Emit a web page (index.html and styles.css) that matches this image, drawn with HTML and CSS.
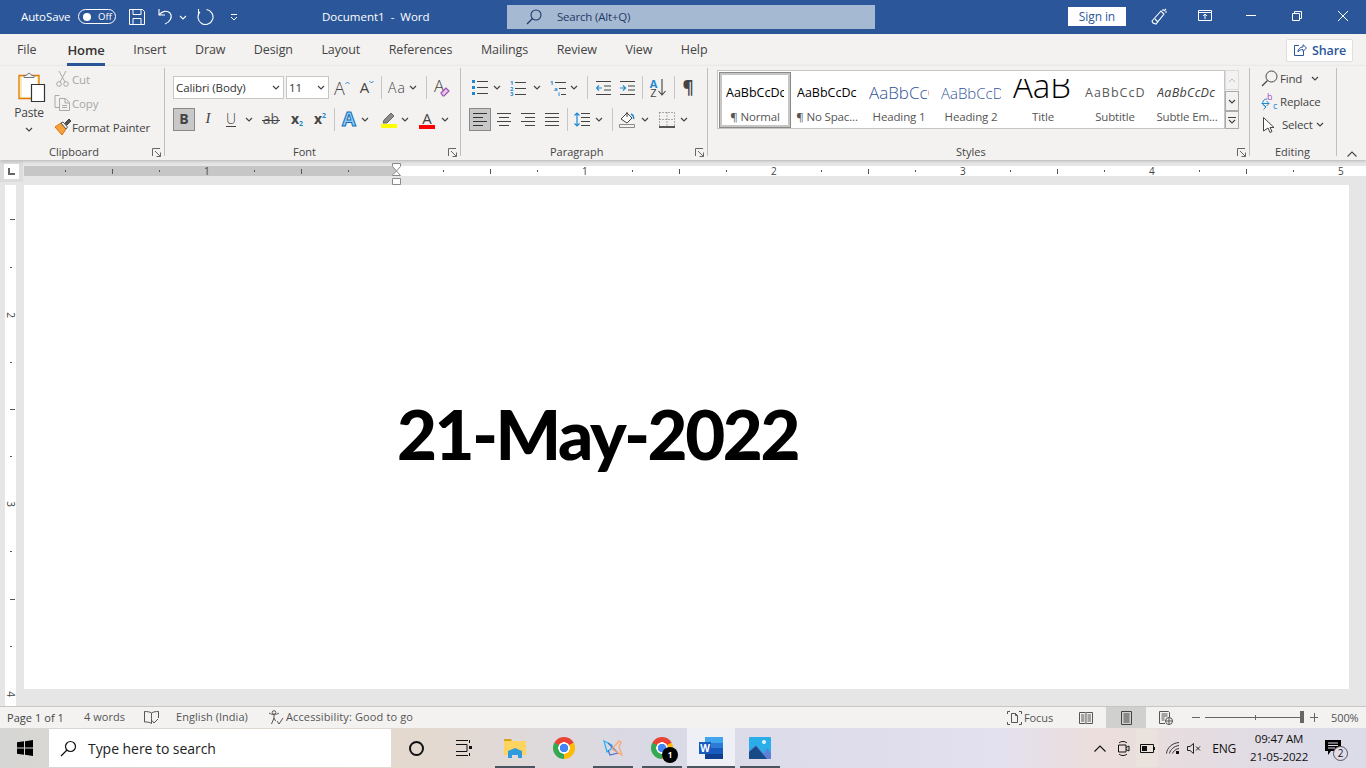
FILE: index.html
```html
<!DOCTYPE html>
<html lang="en">
<head>
<meta charset="utf-8">
<title>Document1 - Word</title>
<link rel="stylesheet" href="styles.css">
</head>
<body>
<svg class="sprite" aria-hidden="true">
  <symbol id="chev" viewBox="0 0 8 5"><path d="M1 1l3 3 3-3" fill="none" stroke="#444" stroke-width="1.2"/></symbol>
  <symbol id="launch" viewBox="0 0 9 9"><path d="M.5 8V.5H8M3 3l5.5 5.5M8.5 4.5v4h-4" fill="none" stroke="#666"/></symbol>
</svg>
<div class="app">
  <header class="titlebar">
    <span class="autosave">AutoSave</span>
    <span class="toggle"><i class="knob"></i><span class="off">Off</span></span>
    <svg class="qa-save" width="16" height="16" viewBox="0 0 16 16"><path d="M.5.5h13l2 2v13H.5zM4 .5v5h8v-5M4 15.5v-6h8v6" fill="none" stroke="#fff"/></svg>
    <svg class="qa-undo" width="16" height="17" viewBox="0 0 16 17"><path d="M1 1v6h6M1 7c3-4 8-5 11-2 3 4 0 9-5 11" fill="none" stroke="#fff" stroke-width="1.1"/></svg>
    <svg class="qa-chev" width="8" height="5"><path d="M1 1l3 3 3-3" fill="none" stroke="#fff" stroke-width="1.1"/></svg>
    <svg class="qa-redo" width="17" height="17" viewBox="0 0 17 17"><path d="M1.500 1v5M3 3.900A7.500 7.500 0 1 0 9.500 1.570" fill="none" stroke="#fff" stroke-width="1.1"/></svg>
    <svg class="qa-more" width="8" height="7" viewBox="0 0 8 7"><path d="M1 .5h6M1 3l3 3 3-3" fill="none" stroke="#fff"/></svg>
    <span class="doc-title">Document1&nbsp; -&nbsp; Word</span>
    <div class="searchbox">
      <svg width="16" height="16" viewBox="0 0 16 16"><circle cx="10" cy="6" r="5" fill="none" stroke="#1f3a66" stroke-width="1.1"/><path d="M6.5 9.5L1 15" stroke="#1f3a66" stroke-width="1.2"/></svg>
      <span>Search (Alt+Q)</span>
    </div>
    <span class="signin">Sign in</span>
    <svg class="tb-pen" width="16" height="17" viewBox="0 0 16 17"><path d="M1 13L10 3l3 3-8 10-3-1zM4 11l3 3M12 1v2M14 4h2M13 3l2-2" fill="none" stroke="#fff" stroke-width="1.1"/></svg>
    <svg class="tb-display" width="14" height="11" viewBox="0 0 14 11"><path d="M.5.5h13v10H.5zM.5 2.5h13M7 9V4.5M5 6l2-2 2 2" fill="none" stroke="#fff"/></svg>
    <svg class="tb-min" width="10" height="1"><path d="M0 .5h10" stroke="#fff"/></svg>
    <svg class="tb-max" width="10" height="10" viewBox="0 0 10 10"><path d="M.5 2.5h7v7h-7zM2.5 2.5v-2h7v7h-2" fill="none" stroke="#fff"/></svg>
    <svg class="tb-close" width="10" height="10" viewBox="0 0 10 10"><path d="M0 0l10 10M10 0L0 10" stroke="#fff"/></svg>
  </header>

  <nav class="tabs">
    <span class="tab tab-file">File</span>
    <span class="tab tab-home">Home</span>
    <span class="tab">Insert</span>
    <span class="tab">Draw</span>
    <span class="tab">Design</span>
    <span class="tab">Layout</span>
    <span class="tab">References</span>
    <span class="tab">Mailings</span>
    <span class="tab">Review</span>
    <span class="tab">View</span>
    <span class="tab">Help</span>
    <span class="share">
      <svg width="13" height="12" viewBox="0 0 13 12"><path d="M5 1.5H.5v10h9V7M4 8c0-3 2-5 5-5V.7l3.5 3.3L9 7.300V5.500C7 5.500 5 6 4 8z" fill="none" stroke="#2b579a"/></svg>
      Share
    </span>
  </nav>

  <section class="ribbon">
    <div class="group g-clip">
      <div class="gbody clip-body">
        <div class="paste">
          <svg class="paste-ico" width="28" height="31" viewBox="0 0 28 31"><path d="M1 3.500h20v23H1z" fill="#fde9b8" stroke="#e07b00" stroke-width="1.300"/><path d="M4 5h15v20H4z" fill="#fff"/><path d="M8 3.500l3-2.500 3 2.500h2v2H6v-2z" fill="#f3f2f1" stroke="#777"/><path d="M13.500 12.500h13v17h-13z" fill="#fff" stroke="#333" stroke-width="1.200"/></svg>
          <span class="paste-label">Paste</span>
          <svg class="chev" width="8" height="5"><use href="#chev"/></svg>
        </div>
        <div class="clip-list">
          <div class="clip-row dim">
            <svg width="18" height="18" viewBox="0 0 18 18"><path d="M5 1l6 11M12 1L6 12" stroke="#a9a9a9" fill="none"/><circle cx="5" cy="14" r="2.300" fill="none" stroke="#a9a9a9"/><circle cx="12" cy="14" r="2.300" fill="none" stroke="#a9a9a9"/></svg>
            <span>Cut</span>
          </div>
          <div class="clip-row dim">
            <svg width="18" height="18" viewBox="0 0 18 18"><path d="M5.500 1.500H1v12h4M5.500 4.500h6l4 4v8h-10zM11 4.500v4.500h4.500M8 11.500h5M8 13.500h5" fill="none" stroke="#a9a9a9"/></svg>
            <span>Copy</span>
          </div>
          <div class="clip-row">
            <svg width="18" height="18" viewBox="0 0 18 18"><path d="M1 9l6-4 5 6-4 6z" fill="#f7a13a" stroke="#d9730d"/><path d="M7 5l5 6 1.500-2L9 4z" fill="#fff" stroke="#555"/><path d="M10.500 5.500L15 1l2 2-4.500 4.500" fill="#555" stroke="#444"/></svg>
            <span>Format Painter</span>
          </div>
        </div>
      </div>
      <div class="gfoot"><span class="foot-label foot-clip">Clipboard</span><svg class="launch" width="9" height="9"><use href="#launch"/></svg></div>
    </div>

    <div class="group g-font">
      <div class="gbody rows">
        <div class="row">
          <span class="combo w111"><span>Calibri (Body)</span><svg class="chev" width="8" height="5"><use href="#chev"/></svg></span>
          <span class="combo w43 ml2"><span>11</span><svg class="chev" width="8" height="5"><use href="#chev"/></svg></span>
          <span class="cell w24 ml1"><span class="glyph g18">A</span><svg class="caret" width="5" height="3" viewBox="0 0 5 3"><path d="M.5 3l2-2 2 2" fill="none" stroke="#2b88d8"/></svg></span>
          <span class="cell w26"><span class="glyph g15">A</span><svg class="caret" width="5" height="3" viewBox="0 0 5 3"><path d="M.5 0l2 2 2-2" fill="none" stroke="#2b88d8"/></svg></span>
          <i class="sep w2"></i>
          <span class="cell w24 ml3"><span class="glyph g14 spaced">Aa</span></span>
          <span class="cell w8"><svg width="8" height="5"><use href="#chev"/></svg></span>
          <i class="sep w2 ml8"></i>
          <span class="cell w30"><span class="glyph g17 clear-a">A</span><svg class="eraser" width="10" height="10" viewBox="0 0 10 10"><path d="M1 6l5-5 3 3-5 5H3z" fill="#e8c8ee" stroke="#9b4fb0" stroke-width="1.200"/></svg></span>
        </div>
        <div class="row row-low">
          <span class="cell w22 pressed"><b class="glyph g14">B</b></span>
          <span class="cell w26"><i class="glyph g15 serif-i">I</i></span>
          <span class="cell w20"><span class="glyph g14 under">U</span></span>
          <span class="cell w16"><svg width="8" height="5"><use href="#chev"/></svg></span>
          <span class="cell w28"><span class="glyph g14 strike">ab</span></span>
          <span class="cell w24"><b class="glyph g14">x</b><b class="sub">2</b></span>
          <span class="cell w22"><b class="glyph g14">x</b><b class="sup">2</b></span>
          <i class="sep w6"></i>
          <span class="cell w24"><b class="glyph effects">A</b></span>
          <span class="cell w8"><svg width="8" height="5"><use href="#chev"/></svg></span>
          <span class="cell w24 ml8">
            <span class="colored">
              <svg width="14" height="12" viewBox="0 0 14 12"><path d="M1 11l1-3 7-7 3 3-7 7z" fill="#8a8a8a" stroke="#666"/></svg>
              <i class="bar bar-yellow"></i>
            </span>
          </span>
          <span class="cell w8"><svg width="8" height="5"><use href="#chev"/></svg></span>
          <span class="cell w28 ml4">
            <span class="colored"><span class="glyph g15 a-color">A</span><i class="bar bar-red"></i></span>
          </span>
          <span class="cell w8"><svg width="8" height="5"><use href="#chev"/></svg></span>
        </div>
      </div>
      <div class="gfoot"><span class="foot-label foot-font">Font</span><svg class="launch" width="9" height="9"><use href="#launch"/></svg></div>
    </div>

    <div class="group g-para">
      <div class="gbody rows">
        <div class="row">
          <span class="cell w22"><svg width="16" height="15" viewBox="0 0 16 15"><path d="M0 0h3v3H0zM0 6h3v3H0zM0 12h3v3H0z" fill="#1e88d0"/><path d="M5 1.500h11M5 7.500h11M5 13.500h11" stroke="#444"/></svg></span>
          <span class="cell w12"><svg width="8" height="5"><use href="#chev"/></svg></span>
          <span class="cell w30"><svg width="16" height="16" viewBox="0 0 16 16"><text class="listnum" x="0" y="5">1</text><text class="listnum" x="0" y="10.500">2</text><text class="listnum" x="0" y="16">3</text><path d="M5 2.500h11M5 8.500h11M5 14.500h11" stroke="#444"/></svg></span>
          <span class="cell w8"><svg width="8" height="5"><use href="#chev"/></svg></span>
          <span class="cell w17 ml8"><svg width="16" height="16" viewBox="0 0 16 16"><text class="listnum" x="0" y="5">1</text><text class="listnum" x="4" y="10.500">a</text><text class="listnum" x="8" y="16">i</text><path d="M5 2.500h11M9 8.500h7M11 14.500h5" stroke="#444"/></svg></span>
          <span class="cell w8 ml4"><svg width="8" height="5"><use href="#chev"/></svg></span>
          <i class="sep w2 ml8"></i>
          <span class="cell w30"><svg width="15" height="14" viewBox="0 0 15 14"><path d="M0 .500h15M8 5h7M8 9h7M0 13.500h15" stroke="#444"/><path d="M6 7H.5M3 4.500L.5 7 3 9.500" fill="none" stroke="#1e88d0" stroke-width="1.200"/></svg></span>
          <span class="cell w18"><svg width="15" height="14" viewBox="0 0 15 14"><path d="M0 .500h15M8 5h7M8 9h7M0 13.500h15" stroke="#444"/><path d="M0 7h5.500M3 4.500L5.500 7 3 9.500" fill="none" stroke="#1e88d0" stroke-width="1.200"/></svg></span>
          <i class="sep w2 ml5"></i>
          <span class="cell w30 sort"><span class="sort-az"><b class="sort-a">A</b><span class="sort-z">Z</span></span><svg width="8" height="17" viewBox="0 0 8 17"><path d="M4 0v16M.5 12L4 16l3.500-4" fill="none" stroke="#444" stroke-width="1.100"/></svg></span>
          <i class="sep w2"></i>
          <span class="cell w26"><span class="glyph pilcrow">¶</span></span>
        </div>
        <div class="row">
          <span class="cell w22 pressed"><svg width="14" height="13" viewBox="0 0 14 13"><path d="M0 .500h14M0 4.500h10M0 8.500h14M0 12.500h10" stroke="#333"/></svg></span>
          <span class="cell w26"><svg width="14" height="13" viewBox="0 0 14 13"><path d="M0 .500h14M2 4.500h10M0 8.500h14M2 12.500h10" stroke="#444"/></svg></span>
          <span class="cell w22"><svg width="14" height="13" viewBox="0 0 14 13"><path d="M0 .500h14M4 4.500h10M0 8.500h14M4 12.500h10" stroke="#444"/></svg></span>
          <span class="cell w26"><svg width="14" height="13" viewBox="0 0 14 13"><path d="M0 .500h14M0 4.500h14M0 8.500h14M0 12.500h14" stroke="#444"/></svg></span>
          <i class="sep w4"></i>
          <span class="cell w26"><svg width="16" height="15" viewBox="0 0 16 15"><path d="M7 1.500h9M7 5.500h9M7 9.500h9M7 13.500h9" stroke="#444"/><path d="M3 1v13M.5 3.500L3 1l2.500 2.500M.5 11.500L3 14l2.500-2.500" fill="none" stroke="#1e88d0" stroke-width="1.200"/></svg></span>
          <span class="cell w8"><svg width="8" height="5"><use href="#chev"/></svg></span>
          <i class="sep w2 ml8"></i>
          <span class="cell w28"><svg width="16" height="17" viewBox="0 0 16 17"><path d="M2 8l6-6 5 5-5 5z" fill="#fff" stroke="#444"/><path d="M8 1v5" stroke="#444"/><path d="M12 3c2 1 3 3 2.500 5" fill="none" stroke="#1e88d0" stroke-width="1.500"/><path d="M.5 13.500h15v3H.5z" fill="#f3f2f1" stroke="#8a8a8a"/></svg></span>
          <span class="cell w8"><svg width="8" height="5"><use href="#chev"/></svg></span>
          <span class="cell w16 ml10"><svg width="16" height="16" viewBox="0 0 16 16"><path d="M.5.500h15M.5.500v14M15.500.500v14M.5 7.500h15M8 .500v14" fill="none" stroke="#666" stroke-dasharray="1 2"/><path d="M0 15h16" stroke="#222" stroke-width="1.500"/></svg></span>
          <span class="cell w8 ml5"><svg width="8" height="5"><use href="#chev"/></svg></span>
        </div>
      </div>
      <div class="gfoot"><span class="foot-label foot-para">Paragraph</span><svg class="launch" width="9" height="9"><use href="#launch"/></svg></div>
    </div>

    <div class="group g-styles">
      <div class="gbody styles-body">
        <div class="gallery">
          <div class="style selected"><span class="preview p-normal">AaBbCcDc</span><span class="style-name">¶ Normal</span></div>
          <div class="style"><span class="preview p-normal">AaBbCcDc</span><span class="style-name">¶ No Spac...</span></div>
          <div class="style"><span class="preview p-h1">AaBbCcC</span><span class="style-name">Heading 1</span></div>
          <div class="style"><span class="preview p-h2">AaBbCcD</span><span class="style-name">Heading 2</span></div>
          <div class="style"><span class="preview p-title"><span>AaB</span></span><span class="style-name">Title</span></div>
          <div class="style"><span class="preview p-sub">AaBbCcD</span><span class="style-name">Subtitle</span></div>
          <div class="style"><span class="preview p-em">AaBbCcDc</span><span class="style-name">Subtle Em...</span></div>
        </div>
        <div class="gal-scroll">
          <span class="gal-btn gal-up"><svg width="8" height="5" viewBox="0 0 8 5"><path d="M1 4l3-3 3 3" fill="none" stroke="#bbb"/></svg></span>
          <span class="gal-btn gal-down"><svg width="8" height="5"><use href="#chev"/></svg></span>
          <span class="gal-btn gal-more"><svg width="8" height="7" viewBox="0 0 8 7"><path d="M0 .500h8M1 3l3 3 3-3" fill="none" stroke="#444" stroke-width="1.100"/></svg></span>
        </div>
      </div>
      <div class="gfoot"><span class="foot-label foot-styles">Styles</span><svg class="launch" width="9" height="9"><use href="#launch"/></svg></div>
    </div>

    <div class="group g-edit">
      <div class="gbody edit-body">
        <div class="edit-row">
          <svg width="17" height="17" viewBox="0 0 17 17"><circle cx="10.500" cy="6.500" r="5.500" fill="none" stroke="#444"/><path d="M6.500 10.500L1 16" stroke="#444" stroke-width="1.300"/></svg>
          <span class="edit-label">Find</span><svg class="chev edit-find-chev" width="8" height="5"><use href="#chev"/></svg>
        </div>
        <div class="edit-row">
          <svg width="17" height="19" viewBox="0 0 17 19"><text class="rep-b" x="6" y="8">b</text><text class="rep-c" x="12" y="17">c</text><path d="M6 7C1 7 0 13 5 15M2.500 12.500L5 15l-2.500 2.500M.5 11.500H8M5.500 9L8 11.500 5.500 14" fill="none" stroke="#1e88d0"/></svg>
          <span class="edit-label">Replace</span>
        </div>
        <div class="edit-row">
          <svg class="sel-ico" width="12" height="16" viewBox="0 0 12 16"><path d="M.5.500l10.500 10H7l2 4-2 1-2-4.500-4.500 3z" fill="#fff" stroke="#444"/></svg>
          <span class="edit-label">Select</span><svg class="chev edit-sel-chev" width="8" height="5"><use href="#chev"/></svg>
        </div>
      </div>
      <div class="gfoot"><span class="foot-label foot-edit">Editing</span></div>
    </div>
    <svg class="collapse" width="10" height="6" viewBox="0 0 10 6"><path d="M.5 5.500L5 1l4.500 4.500" fill="none" stroke="#444" stroke-width="1.100"/></svg>
  </section>

  <div class="hruler-row">
    <div class="corner"><span class="tabstop"><svg width="7" height="7" viewBox="0 0 7 7"><path d="M0 0h2v5h5v2H0z" fill="#666"/></svg></span></div>
    <div class="hruler">
      <i class="t"><u class="dot"></u></i><i class="t"><u class="long"></u></i><i class="t"><u class="dot"></u></i><i class="t"><b>1</b></i><i class="t"><u class="dot"></u></i><i class="t"><u class="long"></u></i><i class="t"><u class="dot"></u></i><i class="t"></i><i class="t"><u class="dot"></u></i><i class="t"><u class="long"></u></i><i class="t"><u class="dot"></u></i><i class="t"><b>1</b></i><i class="t"><u class="dot"></u></i><i class="t"><u class="long"></u></i><i class="t"><u class="dot"></u></i><i class="t"><b>2</b></i><i class="t"><u class="dot"></u></i><i class="t"><u class="long"></u></i><i class="t"><u class="dot"></u></i><i class="t"><b>3</b></i><i class="t"><u class="dot"></u></i><i class="t"><u class="long"></u></i><i class="t"><u class="dot"></u></i><i class="t"><b>4</b></i><i class="t"><u class="dot"></u></i><i class="t"><u class="long"></u></i><i class="t"><u class="dot"></u></i><i class="t"><b>5</b></i>
      <svg class="indent" width="9" height="22" viewBox="0 0 9 22"><path d="M.5.500h8v3L4.500 8l4 4.500H.5V12l4-4-4-4.500z" fill="#fff" stroke="#8a8a8a"/><path d="M.5 15.500h8v6h-8z" fill="#fff" stroke="#8a8a8a"/></svg>
    </div>
  </div>

  <main class="docarea">
    <div class="vruler">
      <i class="v"><u class="vlong"></u></i><i class="v"><u class="vdot"></u></i><i class="v"><b>2</b></i><i class="v"><u class="vdot"></u></i><i class="v"><u class="vlong"></u></i><i class="v"><u class="vdot"></u></i><i class="v"><b>3</b></i><i class="v"><u class="vdot"></u></i><i class="v"><u class="vlong"></u></i><i class="v"><u class="vdot"></u></i><i class="v"><b>4</b></i>
    </div>
    <div class="page"><p class="doc-text">21-May-2022</p></div>
  </main>

  <footer class="status">
    <span class="st-page">Page 1 of 1</span>
    <span class="st-words">4 words</span>
    <svg class="st-book" width="15" height="13" viewBox="0 0 15 13"><path d="M7.500 2C6 .8 3 .5.500.5v10.500c2.500 0 5 0 7 1.500 0-3 0-7 0-10.500zM7.500 2c1.500-1.200 4.500-1.500 7-1.500V7M8 9.500l2 2.500 4-4" fill="none" stroke="#555"/></svg>
    <span class="st-lang">English (India)</span>
    <svg class="st-acc" width="16" height="15" viewBox="0 0 16 15"><circle cx="6" cy="2.500" r="1.800" fill="none" stroke="#555"/><path d="M1 3c3 2 7 2 10 0M6 5v3L3.500 14M6 8l1.500 3M9 11l2 3 4-6" fill="none" stroke="#555"/></svg>
    <span class="st-acc-text">Accessibility: Good to go</span>
    <svg class="st-focus" width="15" height="14" viewBox="0 0 15 14"><path d="M.5 3V.5H3M12 .5h2.500V3M14.500 11v2.500H12M3 13.500H.5V11M4.500 2.500h4l2 2v7h-6zM8.500 2.500v2h2" fill="none" stroke="#555"/></svg>
    <span class="st-focus-text">Focus</span>
    <svg class="st-read" width="14" height="12" viewBox="0 0 14 12"><path d="M.5.500h6l.500.500.500-.500h6v11h-6L7 11l-.500.500h-6zM7 1v10M2 3h3.500M2 5h3.500M2 7h3.500M2 9h3.500M8.500 3H12M8.500 5H12M8.500 7H12M8.500 9H12" fill="none" stroke="#555"/></svg>
    <span class="st-print"><svg width="11" height="14" viewBox="0 0 11 14"><path d="M.5.500h10v13H.5zM2.500 3h6M2.500 5h6M2.500 7h6M2.500 9h6M2.500 11h6" fill="none" stroke="#444"/></svg></span>
    <svg class="st-web" width="14" height="14" viewBox="0 0 14 14"><path d="M6 12.500H.5V.500h9l1 1V6M2.500 3h6M2.500 5h6M2.500 7h3M2.500 9h3" fill="none" stroke="#555"/><circle cx="10" cy="10" r="3.500" fill="#f3f2f1" stroke="#555"/><path d="M6.500 10h7M10 6.500v7" stroke="#555"/></svg>
    <div class="zoomer">
      <i class="z-minus"></i>
      <span class="z-track"><i class="z-mid"></i><i class="z-thumb"></i></span>
      <span class="z-plus"></span>
    </div>
    <span class="st-pct">500%</span>
  </footer>

  <footer class="taskbar">
    <span class="start"><svg width="16" height="16" viewBox="0 0 16 16"><path d="M0 2.300l7-1v6.200H0zM8 1.200L16 0v7.500H8zM0 8.500h7v6.200l-7-1zM8 8.500h8V16l-8-1.200z" fill="#000"/></svg></span>
    <div class="tsearch">
      <svg width="17" height="17" viewBox="0 0 17 17"><circle cx="10.500" cy="6.500" r="5" fill="none" stroke="#111" stroke-width="1.200"/><path d="M7 10L1 16" stroke="#111" stroke-width="1.300"/></svg>
      <span>Type here to search</span>
    </div>
    <span class="tk tk-first"><i class="cortana"></i></span>
    <span class="tk"><svg class="taskview" width="16" height="16" viewBox="0 0 16 16"><path d="M0 .500h12M0 15.500h12M0 4.500h11v7H0" fill="none" stroke="#111"/><path d="M13 0h1v3h-1zM13 6h3v3h-3zM13 13h1v3h-1z" fill="#111"/></svg></span>
    <span class="tk tk-on tk-shift"><svg width="22" height="20" viewBox="0 0 22 20"><path d="M0 1h7l1 2h14v14H0z" fill="#fcd45f"/><path d="M0 1h7l1 2H0z" fill="#d9a21b"/><path d="M4 17v-4l7-3 7 3v4h-4v-3H8v3z" fill="#2f9bdc"/><path d="M4 14h14v6h-4v-3H8v3H4z" fill="#2f9bdc"/></svg></span>
    <span class="tk"><i class="chrome"></i></span>
    <span class="tk tk-on"><svg width="20" height="18" viewBox="0 0 20 18"><path d="M1 2l8 4-1 4-4 3zM1 2l3 11" fill="none" stroke="#29b6f6" stroke-width="1.300"/><path d="M5 4l10 10-8 2-2-5" fill="none" stroke="#4a6fc4" stroke-width="1.200"/><path d="M16 2l-7 8 10 6-3-8 2-5z" fill="none" stroke="#ffa66b" stroke-width="1.300"/></svg></span>
    <span class="tk tk-on"><span class="chrome-wrap"><i class="chrome"></i><b class="badge">1</b></span></span>
    <span class="tk tk-on tk-word"><span class="word"><i class="w1"></i><i class="w2-b"></i><i class="w3"></i><i class="w4-b"></i><b class="wbox">W</b></span></span>
    <span class="tk tk-on"><svg width="22" height="22" viewBox="0 0 22 22"><rect width="22" height="22" rx="1" fill="#29aeea"/><circle cx="15" cy="5" r="2" fill="#e8f4fb"/><path d="M0 14l7-6 8 9 3-6 4 5v6H0z" fill="#5f7fd6"/><path d="M0 15l7-6 11 13H0z" fill="#174a86"/></svg></span>
    <div class="tray">
      <svg class="tr-caret" width="12" height="7" viewBox="0 0 12 7"><path d="M.5 6.500L6 1l5.500 5.500" fill="none" stroke="#111" stroke-width="1.100"/></svg>
      <svg class="tr-meet" width="12" height="17" viewBox="0 0 12 17"><path d="M1 3c2-2 6-2 8 0M1 14c2 2 6 2 8 0" fill="none" stroke="#111"/><path d="M.5 5h7.500v7H.5zM8 7.500l3-1.500v5l-3-1.500" fill="none" stroke="#111"/></svg>
      <span class="tr-batt"><svg width="15" height="9" viewBox="0 0 15 9"><path d="M.5.500h13v8H.5z" fill="none" stroke="#111"/><path d="M2 2h5v5H2z" fill="#111"/><path d="M14 3h1v3h-1z" fill="#111"/></svg></span>
      <svg class="tr-wifi" width="14" height="12" viewBox="0 0 14 12"><path d="M.5 11.500C1 6 6 1 13 .5M3.500 11.500C4 8 8 4 13 3.500M6.500 11.500C7 10 9 7 13 6.500" fill="none" stroke="#333"/><path d="M10 9h3v3h-3z" fill="#111"/></svg>
      <svg class="tr-vol" width="14" height="11" viewBox="0 0 14 11"><path d="M.5 3.500H3L6.500.500v10L3 7.500H.5z" fill="none" stroke="#222"/><path d="M9 3.500l4 4M13 3.500l-4 4" stroke="#222"/></svg>
      <span class="tr-lang">ENG</span>
      <span class="clock"><span>09:47 AM</span><span>21-05-2022</span></span>
      <span class="notif"><svg width="18" height="16" viewBox="0 0 18 16"><path d="M0 0h16v11h-10l-3 4v-4H0z" fill="#000"/><path d="M3 3h10M3 5.500h10M3 8h7" stroke="#e2dcea"/></svg><b class="notif-badge">2</b></span>
    </div>
  </footer>
</div>
</body>
</html>
```
FILE: styles.css
```css
* { box-sizing: border-box; }
html, body { margin: 0; padding: 0; }
body { width: 1366px; height: 768px; overflow: hidden; font-family: "Open Sans", "Noto Sans", sans-serif; font-size: 12px; color: #444; background: #f3f2f1; }
.sprite { display: none; }
svg { display: block; flex: none; }
i, u, b { font-style: normal; text-decoration: none; }
.app { display: flex; flex-direction: column; width: 1366px; height: 768px; }

/* title bar */
.titlebar { display: flex; align-items: center; height: 34px; flex: none; background: #2b579a; color: #fff; padding-left: 21px; }
.autosave { width: 57px; margin-top: -2px; font-size: 11.5px; letter-spacing: -.1px; }
.toggle { display: flex; align-items: center; width: 38px; height: 15px; margin-top: -1px; border: 1px solid #fff; border-radius: 8px; padding-left: 4px; }
.knob { width: 8px; height: 8px; border-radius: 50%; background: #fff; }
.off { margin-left: 7px; font-size: 9.5px; }
.qa-save { margin-left: 13px; }
.qa-undo { margin-left: 13px; margin-top: -2px; }
.qa-chev { margin-left: 5px; }
.qa-redo { margin-left: 10px; margin-top: -1px; }
.qa-more { margin-left: 16px; }
.doc-title { margin-left: 84px; margin-top: -2px; width: 185px; font-size: 11.5px; }
.searchbox { display: flex; align-items: center; width: 368px; height: 24px; margin-top: -1px; background: #a6b9d3; color: #1f3a66; padding-left: 19px; font-size: 11.5px; letter-spacing: -.2px; }
.searchbox span { margin-left: 15px; }
.signin { display: flex; align-items: center; justify-content: center; width: 58px; height: 19px; margin-left: 193px; margin-top: -1px; background: #fff; color: #2b579a; font-size: 12px; letter-spacing: -.1px; }
.tb-pen { margin-left: 25px; margin-top: -2px; }
.tb-display { margin-left: 31px; margin-top: -3px; }
.tb-min { margin-left: 34px; margin-top: -4px; }
.tb-max { margin-left: 36px; margin-top: -3px; }
.tb-close { margin-left: 36px; margin-top: -3px; }

/* tabs */
.tabs { display: flex; align-items: center; height: 32px; flex: none; padding-left: 17px; background: #f3f2f1; gap: 28.5px; font-size: 12.5px; letter-spacing: -.1px; }
.tab { position: relative; line-height: 30px; }
.tab-file { margin-right: 2.5px; }
.tab-home { color: #333; font-size: 13px; font-weight: 600; letter-spacing: -.05px; }
.tab-home::after { content: ""; position: absolute; left: 0; right: 0; bottom: -1px; height: 3px; background: #2b579a; }
.share { display: flex; align-items: center; gap: 5px; width: 67px; height: 23px; margin-left: auto; margin-right: 13px; padding-left: 7px; background: #fff; border: 1px solid #e1dfdd; border-radius: 2px; color: #2b579a; font-size: 12.5px; font-weight: 600; }

/* ribbon */
.ribbon { position: relative; z-index: 2; display: flex; align-items: flex-start; height: 94px; flex: none; padding-top: 2px; background: #f3f2f1; box-shadow: 0 1px 3px rgba(0,0,0,.22); }
.group { display: flex; flex-direction: column; height: 88px; flex: none; border-right: 1px solid #c0bfbd; }
.g-clip { width: 165px; }
.g-font { width: 296px; }
.g-para { width: 247px; }
.g-styles { width: 542px; }
.g-edit { width: 87px; }
.gbody { height: 77px; flex: none; }
.gfoot { position: relative; display: flex; align-items: center; height: 14px; font-size: 11px; margin-bottom: -3px; }
.foot-label { position: absolute; top: 0; line-height: 14px; }
.foot-clip { left: 49px; }
.foot-font { left: 128px; }
.foot-para { left: 89px; }
.foot-styles { left: 248px; }
.foot-edit { left: 25px; }
.launch { margin-left: auto; margin-right: 3px; }

/* clipboard */
.clip-body { display: flex; }
.paste { display: flex; flex-direction: column; align-items: center; width: 46px; margin-left: 6px; padding-top: 4px; }
.paste-ico { margin-left: 6px; }
.paste-label { margin-top: 1px; line-height: 18px; font-size: 12px; letter-spacing: -.2px; }
.paste .chev { margin-top: 5px; }
.clip-list { margin-left: 2px; margin-top: -1px; }
.clip-row { display: flex; align-items: center; height: 24px; font-size: 11.500px; letter-spacing: -.15px; }
.clip-row.dim { color: #a6a6a6; }

/* font + paragraph rows */
.rows { display: flex; flex-direction: column; gap: 9px; padding: 8px 0 0 8px; }
.row { display: flex; align-items: center; height: 23px; }
.cell { display: flex; align-items: center; justify-content: center; height: 23px; flex: none; }
.combo { display: flex; align-items: center; justify-content: space-between; height: 23px; flex: none; padding: 0 3px 0 2px; background: #fff; border: 1px solid #c8c6c4; font-size: 11.500px; letter-spacing: -.1px; color: #333; }
.w2 { width: 2px; } .w4 { width: 4px; } .w6 { width: 6px; } .w8 { width: 8px; }
.w12 { width: 12px; } .w16 { width: 16px; } .w17 { width: 17px; } .w18 { width: 18px; }
.w20 { width: 20px; } .w22 { width: 22px; } .w24 { width: 24px; } .w26 { width: 26px; }
.w28 { width: 28px; } .w30 { width: 30px; } .w43 { width: 43px; } .w111 { width: 111px; }
.ml1 { margin-left: 1px; } .ml2 { margin-left: 2px; } .ml3 { margin-left: 3px; } .ml4 { margin-left: 4px; }
.ml5 { margin-left: 5px; } .ml8 { margin-left: 8px; } .ml10 { margin-left: 10px; }
.sep { display: flex; justify-content: center; height: 23px; flex: none; }
.sep::before { content: ""; width: 1px; height: 100%; background: #c8c6c4; }
.pressed { background: #c8c8c8; border: 1px solid #8a8a8a; }
.glyph { line-height: 1; color: #444; }
.row-low .glyph { margin-bottom: 2px; }
.row-low .a-color { margin-bottom: 0; }
.g14 { font-size: 14px; }
.g15 { font-size: 15px; }
.g17 { font-size: 17px; font-weight: 300; }
.g18 { font-size: 18px; font-weight: 300; }
.spaced { letter-spacing: 1px; font-weight: 300; }
.caret { margin-bottom: 11px; }
.clear-a { margin-right: -4px; margin-bottom: 4px; }
.eraser { margin-top: 8px; }
.serif-i { font-family: "Liberation Serif", serif; font-style: italic; }
.under { text-decoration: underline; text-decoration-thickness: 1px; text-underline-offset: 2px; font-weight: 300; }
.strike { position: relative; font-weight: 400; color: #555; }
.strike::after { content: ""; position: absolute; left: -1px; right: -1px; top: 8px; height: 1px; background: #444; }
.sub, .sup { font-size: 7px; color: #1e88d0; line-height: 1; }
.sub { margin-top: 8px; }
.sup { margin-top: -8px; }
.effects { font-size: 20px; color: #8fcbf2; -webkit-text-stroke: 1px #0f6cbd; }
.colored { display: flex; flex-direction: column; align-items: center; width: 16px; }
.bar { width: 16px; height: 4px; }
.bar-yellow { background: #ffff00; }
.bar-red { background: #ff0000; }
.a-color { height: 14px; line-height: 14px; }
.listnum { font-size: 6px; font-weight: 700; fill: #1e88d0; font-family: "Open Sans", sans-serif; }
.rep-b { font-size: 9px; fill: #a64dbb; font-family: "Open Sans", sans-serif; }
.rep-c { font-size: 9px; fill: #1e88d0; font-family: "Open Sans", sans-serif; }
.sort { gap: 1px; }
.sort-az { display: flex; flex-direction: column; align-items: center; line-height: 9px; font-size: 11px; }
.sort-a { color: #1e88d0; }
.sort-z { color: #444; }
.pilcrow { font-size: 17px; font-weight: 700; color: #444; }

/* styles gallery */
.styles-body { display: flex; padding: 2px 0 0 9px; }
.gallery { display: flex; width: 508px; height: 59px; padding: 1px; background: #fff; border: 1px solid #c8c6c4; }
.style { display: flex; flex-direction: column; align-items: center; width: 72px; height: 56px; flex: none; }
.style.selected { background: #fff; border: 3px solid #c8c6c4; outline: 1px solid #8a8a8a; outline-offset: -1px; }
.preview { display: block; width: 60px; height: 36px; flex: none; overflow: hidden; white-space: nowrap; text-align: left; line-height: 36px; color: #000; margin-top: 3px; }
.selected .preview { margin-top: 0; width: 58px; }
.style-name { margin-top: -2px; line-height: 16px; font-size: 11.500px; letter-spacing: -.15px; color: #555; white-space: nowrap; }
.p-normal { font-size: 12.500px; letter-spacing: 0; }
.p-h1 { font-size: 17px; color: #2f5496; font-weight: 300; }
.p-h2 { font-size: 15px; color: #2f5496; font-weight: 300; width: 60px; }
.p-title { height: 20px; margin-top: 7px; margin-bottom: 12px; padding-right: 4px; font-size: 33px; line-height: 20px; font-weight: 300; text-align: center; overflow: hidden; }
.p-title span { display: block; margin-top: -3px; }
.p-sub { font-size: 12.500px; color: #595959; letter-spacing: 1px; }
.p-em { font-size: 12.500px; color: #404040; font-style: italic; letter-spacing: .3px; }
.gal-scroll { display: flex; flex-direction: column; width: 14px; height: 59px; }
.gal-btn { display: flex; align-items: center; justify-content: center; border: 1px solid #c8c6c4; background: #f3f2f1; }
.gal-up { height: 20px; border-color: #dcdbd9; }
.gal-down { height: 20px; margin-top: 1px; border-color: #aaa; }
.gal-more { height: 18px; border-color: #aaa; }

/* editing */
.edit-body { display: flex; flex-direction: column; padding-left: 11px; margin-top: -1px; margin-bottom: 1px; }
.edit-row { display: flex; align-items: center; height: 23px; }
.edit-label { margin-left: 2px; font-size: 11.500px; letter-spacing: -.2px; }
.sel-ico { margin: 0 5px 0 2px; }
.edit-find-chev { margin-left: 9px; }
.edit-sel-chev { margin-left: 3px; }
.collapse { margin: 83px 0 0 10px; }

/* horizontal ruler */
.hruler-row { display: flex; height: 25px; flex: none; background: #e6e6e6; }
.corner { display: flex; align-items: center; justify-content: center; width: 23px; height: 21px; background: #dcdcdc; margin-top: 1px; margin-right: 1px; }
.tabstop { display: flex; align-items: center; justify-content: center; width: 15px; height: 15px; background: #fff; }
.hruler { position: relative; display: flex; align-items: center; width: 1342px; height: 10px; margin-top: 6px; padding-left: 17.400px; background: linear-gradient(90deg, #c6c6c6 373px, #fff 373px); overflow: visible; }
.t { display: flex; align-items: center; justify-content: center; width: 47.250px; height: 10px; flex: none; color: #444; font-size: 10px; }
.t b { font-weight: 400; line-height: 10px; }
.dot { width: 1px; height: 2px; background: #555; }
.long { width: 1px; height: 5px; background: #555; }
.indent { position: absolute; left: 368px; top: -3px; }

/* document */
.docarea { display: flex; height: 521px; flex: none; background: #e6e6e6; overflow: hidden; }
.vruler { display: flex; flex-direction: column; width: 11px; margin: 0 8px 0 5px; padding-top: 11.300px; background: #fff; flex: none; }
.v { display: flex; align-items: center; justify-content: center; height: 47.400px; flex: none; color: #444; font-size: 10px; }
.v b { font-weight: 400; line-height: 10px; transform: rotate(90deg); }
.vlong { width: 5px; height: 1px; background: #555; margin-left: 4px; }
.vdot { width: 2px; height: 1px; background: #555; }
.page { width: 1325px; height: 504px; flex: none; padding-left: 373px; background: #fff; }
.doc-text { margin: 205px 0 0; font-family: Lato, "Open Sans", sans-serif; font-weight: 900; font-size: 69px; line-height: 88px; letter-spacing: -2.400px; color: #000; white-space: nowrap; }

/* status bar */
.status { display: flex; align-items: center; height: 22px; flex: none; border-top: 1px solid #c6c6c6; background: #f3f2f1; font-size: 11px; letter-spacing: .05px; color: #555; padding-left: 7px; }
.st-page { width: 77px; color: #444; }
.st-words, .st-lang, .st-acc-text, .st-focus-text { margin-top: -2px; }
.st-words { width: 60px; }
.st-book { margin-right: 17px; }
.st-lang { width: 92px; }
.st-acc { margin-right: 2px; }
.st-acc-text { width: 721px; letter-spacing: .12px; }
.st-focus { margin-right: 2px; }
.st-focus-text { width: 55px; letter-spacing: -.1px; margin-top: 0; }
.st-read { margin-right: 13px; }
.st-print { display: flex; align-items: center; justify-content: center; width: 40px; height: 21px; background: #d0d0cf; }
.st-web { margin-left: 13px; }
.zoomer { display: flex; align-items: center; margin-left: 19px; }
.z-minus { width: 8px; height: 1px; background: #666; }
.z-track { position: relative; width: 97px; height: 1px; margin-left: 5px; background: #666; }
.z-mid { position: absolute; left: 50px; top: -2px; width: 1px; height: 5px; background: #666; }
.z-thumb { position: absolute; right: -2px; top: -6px; width: 4px; height: 12px; background: #666; }
.z-plus { position: relative; width: 8px; height: 9px; margin-left: 8px; background: linear-gradient(#666,#666) center/8px 1px no-repeat, linear-gradient(#666,#666) center/1px 9px no-repeat; }
.st-pct { margin-left: 13px; letter-spacing: -.1px; }

/* taskbar */
.taskbar { display: flex; align-items: stretch; height: 40px; flex: none; background: linear-gradient(90deg, #d6d6d4 0, #e4d9cf 420px, #d9d9e6 650px, #e3e0ef 1000px, #ecdedb 1100px, #dcdbe8 1320px, #dcdbe8 1366px); color: #111; }
.start { display: flex; align-items: center; justify-content: center; width: 49px; flex: none; }
.tsearch { display: flex; align-items: center; width: 342px; margin: 1px 0; padding-left: 11px; background: #fff; flex: none; font-size: 14px; letter-spacing: -.05px; color: #222; }
.tsearch span { margin-left: 11px; }
.tk { position: relative; display: flex; align-items: center; justify-content: center; width: 48px; margin-right: 1px; flex: none; }
.tk-first { margin-left: 1px; }
.tk-shift { margin-left: 1px; }
.tk-on::after { content: ""; position: absolute; left: 4px; right: 4px; bottom: 0; height: 2px; background: #4a5560; }
.tk-word { background: #eff0f6; }
.tk-word::after { left: 0; right: 0; }
.cortana { width: 15px; height: 15px; border: 2.500px solid #111; border-radius: 50%; }
.taskview { margin-right: 3px; }
.chrome { display: block; width: 22px; height: 22px; border-radius: 50%; background: radial-gradient(circle, #4285f4 0 4px, #fff 4.500px 5.500px, transparent 6px), conic-gradient(from -60deg, #ea4335 0 120deg, #fbbc05 0 240deg, #34a853 0); }
.chrome-wrap { position: relative; display: block; width: 22px; height: 22px; }
.badge { position: absolute; right: -5px; bottom: -4px; width: 16px; height: 16px; border-radius: 50%; background: #000; color: #fff; font-size: 8px; line-height: 16px; text-align: center; }
.word { position: relative; display: flex; flex-direction: column; width: 18px; height: 22px; margin-left: 6px; }
.word i { flex: 1; }
.w1 { background: #41a5ee; }
.w2-b { background: #2b7cd3; }
.w3 { background: #185abd; }
.w4-b { background: #103f91; }
.wbox { position: absolute; left: -6px; top: 5px; width: 12px; height: 12px; background: #185abd; color: #fff; font-size: 10px; line-height: 12px; text-align: center; font-weight: 700; }
.tray { display: flex; align-items: center; margin-left: auto; }
.tr-caret { margin-right: 12px; }
.tr-meet { margin-right: 6px; }
.tr-batt { display: flex; align-items: center; justify-content: center; width: 22px; height: 38px; background: #eae2dc; }
.tr-wifi { margin-left: 8px; }
.tr-vol { margin-left: 7px; }
.tr-lang { margin-left: 11px; font-size: 12px; letter-spacing: -.2px; }
.clock { display: flex; flex-direction: column; align-items: center; gap: 2px; width: 58px; margin-left: 14px; font-size: 11.500px; letter-spacing: -.2px; line-height: 16px; white-space: nowrap; }
.notif { position: relative; display: block; width: 19px; margin: 0 22px 0 17px; }
.notif-badge { position: absolute; left: 8px; top: 6px; width: 15px; height: 15px; border-radius: 50%; border: 1px solid #555; background: #e2dcea; font-size: 10px; line-height: 13px; text-align: center; font-weight: 400; }
```
